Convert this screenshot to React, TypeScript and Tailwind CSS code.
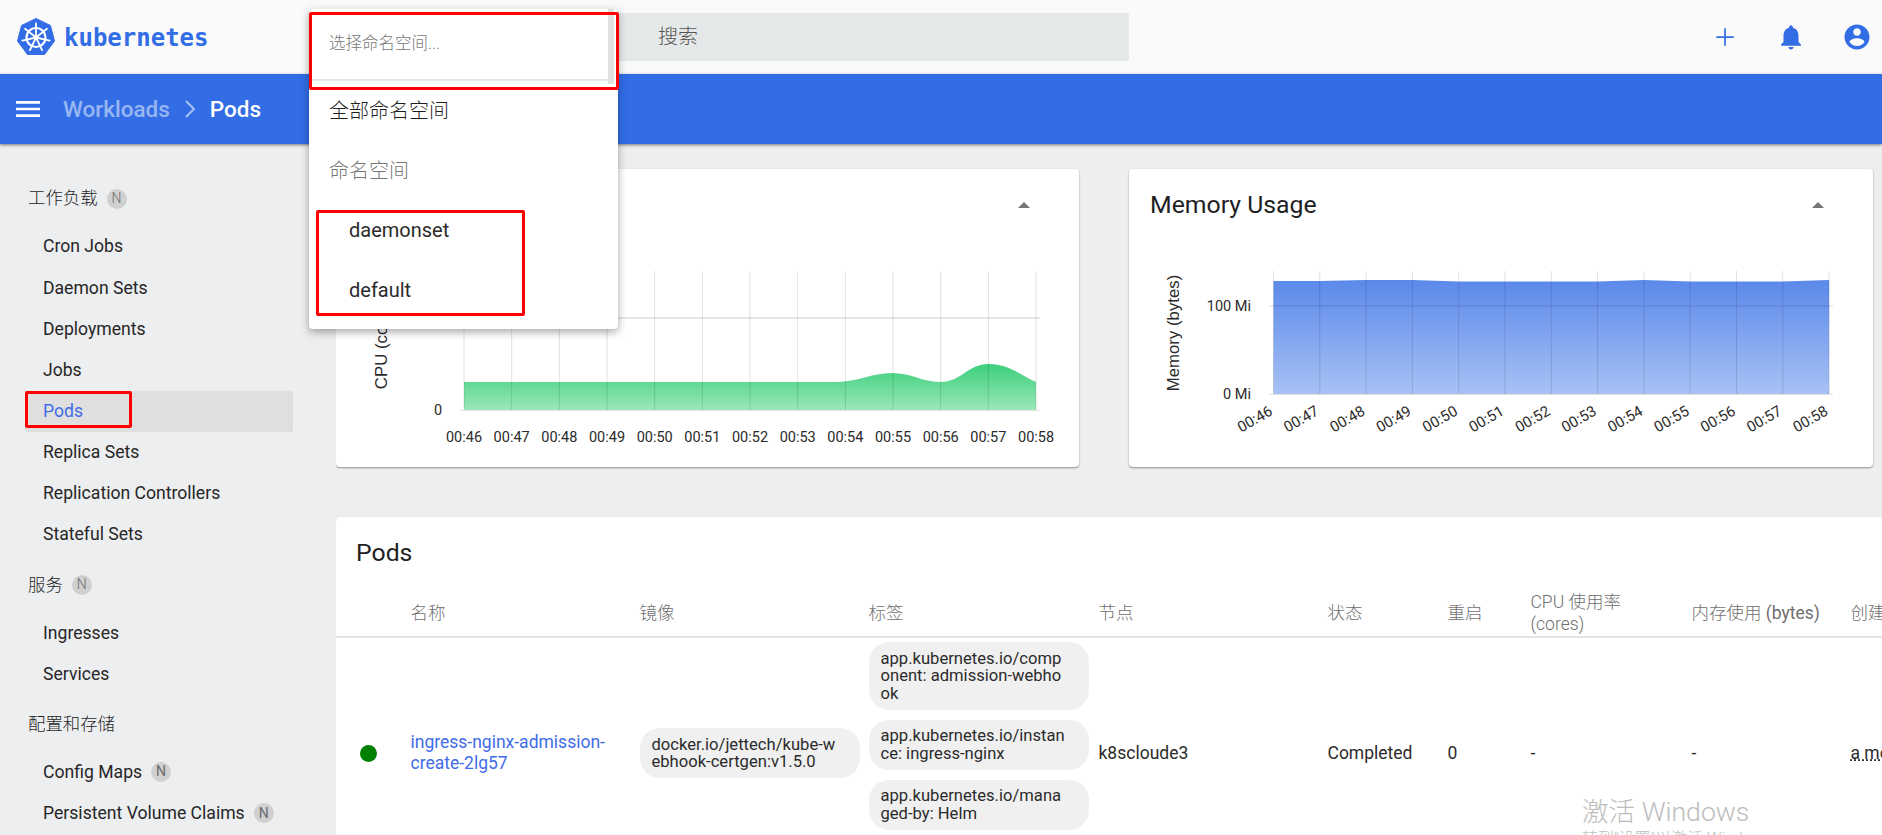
import React from "react";

const times = ["00:46", "00:47", "00:48", "00:49", "00:50", "00:51", "00:52", "00:53", "00:54", "00:55", "00:56", "00:57", "00:58"];

const groups = [
  { title: "工作负载", badge: true, items: ["Cron Jobs", "Daemon Sets", "Deployments", "Jobs", "Pods", "Replica Sets", "Replication Controllers", "Stateful Sets"] },
  { title: "服务", badge: true, items: ["Ingresses", "Services"] },
  { title: "配置和存储", badge: false, items: ["Config Maps", "Persistent Volume Claims"] },
];

function Badge() {
  return (
    <span className="ml-[9px] flex h-[20px] w-[20px] items-center justify-center rounded-full bg-[#d0d0d0] text-[14px] text-[#6b6b6b]">
      N
    </span>
  );
}

function Sidebar() {
  return (
    <aside className="w-[336px] shrink-0 pt-[33px] pl-[25px]">
      {groups.map((g) => (
        <div key={g.title} className="mb-[8px] w-[268px]">
          <div className="mb-[8px] flex h-[41px] items-center pt-[2px] pl-[3px] text-[17.4px] font-light text-[#1f1f1f]">
            {g.title}
            {g.badge && <Badge />}
          </div>
          {g.items.map((item) => (
            <div
              key={item}
              className={
                item === "Pods"
                  ? "flex h-[41.15px] items-center rounded-[2px] bg-[#dfdfdf] pl-[18px] text-[17.6px] text-[#3f6ce8]"
                  : "flex h-[41.15px] items-center pl-[18px] text-[17.6px] text-[#262626]"
              }
            >
              {item}
              {(item === "Config Maps" || item === "Persistent Volume Claims") && <Badge />}
            </div>
          ))}
        </div>
      ))}
    </aside>
  );
}

function CpuChart() {
  const xs = times.map((_, i) => 128 + i * 47.67);
  const area =
    "M128 141 L501 141 C521 141 536 132 556 132 C576 132 586 141 604 141 C626 141 631 123 653 123 C673 123 686 135 700 141 L700 169 L128 169 Z";
  return (
    <svg width="743" height="226" className="block">
      <defs>
        <linearGradient id="cpuFill" x1="0" y1="0" x2="0" y2="1">
          <stop offset="0" stopColor="#3ccf7c" />
          <stop offset="1" stopColor="#9ae7b9" />
        </linearGradient>
      </defs>
      <path d={area} fill="url(#cpuFill)" />
      <line x1="124" y1="77" x2="704" y2="77" stroke="#e6e6e6" strokeWidth="2" />
      <line x1="124" y1="169.5" x2="704" y2="169.5" stroke="#e6e6e6" />
      {xs.map((x) => (
        <line key={x} x1={x} y1="30" x2={x} y2="169" stroke="#000" strokeOpacity="0.12" />
      ))}
      {times.map((t, i) => (
        <text key={t} x={xs[i]} y="201" textAnchor="middle" fontSize="14.5" fill="#2b2b2b">
          {t}
        </text>
      ))}
      <text x="102" y="174" textAnchor="middle" fontSize="14.5" fill="#2b2b2b">
        0
      </text>
      <text transform="translate(51 102) rotate(-90)" textAnchor="middle" fontSize="16.8" fontFamily="'Liberation Sans', sans-serif" fill="#2b2b2b">
        CPU (cores)
      </text>
    </svg>
  );
}

function MemoryChart() {
  const xs = times.map((_, i) => 144.5 + i * 46.3);
  const tops = [40, 40, 39, 39, 40.5, 40.5, 40.5, 40.5, 39, 40.5, 40.5, 40.5, 39];
  const area = "M144.5 153 L" + xs.map((x, i) => x + " " + tops[i]).join(" L") + " L" + xs[12] + " 153 Z";
  return (
    <svg width="744" height="226" className="block">
      <defs>
        <linearGradient id="memFill" x1="0" y1="0" x2="0" y2="1">
          <stop offset="0" stopColor="#5b89ea" />
          <stop offset="1" stopColor="#a7c1f4" />
        </linearGradient>
      </defs>
      <path d={area} fill="url(#memFill)" />
      <line x1="140" y1="65" x2="704" y2="65" stroke="#000" strokeOpacity="0.07" strokeWidth="2" />
      <line x1="140" y1="153.5" x2="704" y2="153.5" stroke="#e0e0e0" />
      {xs.map((x) => (
        <line key={x} x1={x} y1="30" x2={x} y2="153" stroke="#000" strokeOpacity="0.12" />
      ))}
      {times.map((t, i) => (
        <text key={t} transform={`translate(${xs[i]} 173) rotate(-30)`} textAnchor="end" fontSize="15" fill="#2b2b2b">
          {t}
        </text>
      ))}
      <text x="122" y="70" textAnchor="end" fontSize="14.5" fill="#2b2b2b">
        100 Mi
      </text>
      <text x="122" y="158" textAnchor="end" fontSize="14.5" fill="#2b2b2b">
        0 Mi
      </text>
      <text transform="translate(50 92) rotate(-90)" textAnchor="middle" fontSize="16.8" fontFamily="'Liberation Sans', sans-serif" fill="#2b2b2b">
        Memory (bytes)
      </text>
    </svg>
  );
}

function UsageCard({ title, wide, children }: { title: string; wide?: boolean; children: React.ReactNode }) {
  return (
    <section className={(wide ? "w-[744px]" : "w-[743px]") + " shrink-0 overflow-hidden rounded-[4px] bg-white shadow-[0_1px_2px_rgba(0,0,0,0.4)]"}>
      <div className="flex h-[72px] items-center justify-between pr-[49px] pl-[21px]">
        <h2 className="text-[24.8px] font-normal text-[#1f1f1f]">{title}</h2>
        <span className="h-0 w-0 border-r-[6px] border-b-[6px] border-l-[6px] border-r-transparent border-b-[#757575] border-l-transparent" />
      </div>
      {children}
    </section>
  );
}

function Chip({ lines }: { lines: string[] }) {
  return (
    <div className="w-[220px] rounded-[20px] bg-[#f0f0f0] px-[12px] py-[7.5px] text-[16.6px] leading-[17.5px] text-[#2b2b2b]">
      {lines.map((l) => (
        <div key={l} className="whitespace-nowrap">
          {l}
        </div>
      ))}
    </div>
  );
}

function PodsCard() {
  return (
    <section className="mt-[50px] w-[1620px] rounded-t-[4px] bg-white shadow-[0_1px_2px_rgba(0,0,0,0.3)]">
      <h2 className="flex h-[73px] items-center pb-[2px] pl-[20px] text-[24.8px] font-normal text-[#1f1f1f]">Pods</h2>
      <div className="grid h-[48px] grid-cols-[74.5px_229px_229px_230px_229px_120px_83px_161px_159px_200px] items-center border-b-[2px] border-[#e4e4e4] text-[17.5px] leading-[22px] font-light text-[#6f6f6f]">
        <span />
        <span>名称</span>
        <span>镜像</span>
        <span>标签</span>
        <span>节点</span>
        <span>状态</span>
        <span>重启</span>
        <span>
          CPU 使用率
          <br />
          (cores)
        </span>
        <span className="whitespace-nowrap">
          内存使用 <span className="font-normal">(bytes)</span>
        </span>
        <span>创建</span>
      </div>
      <div className="grid h-[230px] grid-cols-[74.5px_229px_229px_230px_229px_120px_83px_161px_159px_200px] items-center text-[17.5px] text-[#2b2b2b]">
        <span className="ml-[24px] h-[17px] w-[17px] rounded-full bg-[#008000]" />
        <a className="leading-[21px] text-[#3f6ce8]">
          ingress-nginx-admission-
          <br />
          create-2lg57
        </a>
        <Chip lines={["docker.io/jettech/kube-w", "ebhook-certgen:v1.5.0"]} />
        <div className="flex flex-col gap-[10px] self-start pt-[4px]">
          <Chip lines={["app.kubernetes.io/comp", "onent: admission-webho", "ok"]} />
          <Chip lines={["app.kubernetes.io/instan", "ce: ingress-nginx"]} />
          <Chip lines={["app.kubernetes.io/mana", "ged-by: Helm"]} />
        </div>
        <span>k8scloude3</span>
        <span>Completed</span>
        <span>0</span>
        <span>-</span>
        <span>-</span>
        <span className="underline decoration-dotted">a month ago</span>
      </div>
    </section>
  );
}

function Logo() {
  const spokes = [0, 51.4, 102.8, 154.3, 205.7, 257.1, 308.6];
  return (
    <svg width="38" height="38" viewBox="0 0 38 38" className="shrink-0">
      <path d="M19 0.5 L33.5 7.5 L37.5 23 L27.5 36.5 L10.5 36.5 L0.5 23 L4.5 7.5 Z" fill="#326de6" stroke="#326de6" strokeWidth="1" strokeLinejoin="round" />
      <circle cx="19" cy="19.5" r="9.5" fill="none" stroke="#fff" strokeWidth="2.2" />
      <circle cx="19" cy="19.5" r="2" fill="#fff" />
      {spokes.map((a) => (
        <line key={a} x1="19" y1="19.5" x2="19" y2="5.5" stroke="#fff" strokeWidth="1.8" strokeLinecap="round" transform={`rotate(${a} 19 19.5)`} />
      ))}
    </svg>
  );
}

export default function App() {
  return (
    <div className="relative h-[835px] w-[1882px] overflow-hidden bg-[#edeef0] font-['Roboto','Noto_Sans_CJK_SC',sans-serif]">
      {/* top bar */}
      <header className="flex h-[74px] items-center bg-[#fafafa] pr-[10px] pl-[17px]">
        <Logo />
        <span className="ml-[9px] w-[516px] pt-[1px] font-['DejaVu_Sans_Mono',monospace] text-[24px] font-semibold text-[#326de6]">kubernetes</span>
        <div className="flex h-[48px] w-[549px] items-center rounded-[2px] bg-[#e5e8e8] pl-[17px] text-[20px] font-light text-[#555]">
          <svg width="24" height="24" viewBox="0 0 24 24" fill="#326de6" className="mr-[37px]">
            <path d="M15.5 14h-.79l-.28-.27C15.41 12.59 16 11.11 16 9.5 16 5.91 13.09 3 9.5 3S3 5.91 3 9.5 5.91 16 9.5 16c1.61 0 3.09-.59 4.23-1.57l.27.28v.79l5 4.99L20.49 19l-4.99-5zm-6 0C7.01 14 5 11.99 5 9.5S7.01 5 9.5 5 14 7.01 14 9.5 11.99 14 9.5 14z" />
          </svg>
          搜索
        </div>
        <div className="ml-auto flex items-center gap-[36px] text-[#326de6]">
          <svg width="30" height="30" viewBox="0 0 24 24" fill="currentColor">
            <path d="M19 12.7h-6.3V19h-1.4v-6.3H5v-1.4h6.3V5h1.4v6.3H19z" />
          </svg>
          <svg width="30" height="30" viewBox="0 0 24 24" fill="currentColor">
            <path d="M12 22c1.1 0 2-.9 2-2h-4c0 1.1.89 2 2 2zm6-6v-5c0-3.07-1.64-5.64-4.5-6.32V4c0-.83-.67-1.5-1.5-1.5s-1.5.67-1.5 1.5v.68C7.63 5.36 6 7.92 6 11v5l-2 2v1h16v-1l-2-2z" />
          </svg>
          <svg width="30" height="30" viewBox="0 0 24 24" fill="currentColor">
            <path d="M12 2C6.48 2 2 6.48 2 12s4.48 10 10 10 10-4.48 10-10S17.52 2 12 2zm0 3c1.66 0 3 1.34 3 3s-1.34 3-3 3-3-1.34-3-3 1.34-3 3-3zm0 14.2c-2.5 0-4.71-1.28-6-3.22.03-1.99 4-3.08 6-3.08 1.99 0 5.97 1.09 6 3.08-1.29 1.94-3.5 3.22-6 3.22z" />
          </svg>
        </div>
      </header>

      {/* breadcrumb bar */}
      <div className="relative z-10 flex h-[70px] items-center bg-[#326de6] pl-[12px] text-[22.5px] font-medium shadow-[0_1px_3px_rgba(0,0,0,0.5)]">
        <svg width="32" height="32" viewBox="0 0 24 24" fill="#fff">
          <path d="M3 18h18v-2H3v2zm0-5h18v-2H3v2zm0-7v2h18V6H3z" />
        </svg>
        <span className="ml-[19px] pt-[1px] text-white/50">Workloads</span>
        <svg width="13" height="20" viewBox="0 0 13 20" fill="none" stroke="#a9c1f4" strokeWidth="2" className="mr-[13px] ml-[14px]">
          <path d="M2 2l8 8-8 8" />
        </svg>
        <span className="pt-[1px] text-white">Pods</span>
      </div>

      <div className="flex h-[691px]">
        <Sidebar />
        <main className="min-w-0 flex-1 overflow-hidden pt-[25px]">
          <div className="flex gap-[50px]">
            <UsageCard title="CPU Usage">
              <CpuChart />
            </UsageCard>
            <UsageCard title="Memory Usage" wide>
              <MemoryChart />
            </UsageCard>
          </div>
          <PodsCard />
        </main>
      </div>

      {/* namespace dropdown */}
      <div className="absolute top-[9px] left-[309px] z-20 h-[320px] w-[309px] rounded-[4px] bg-white text-[18px] shadow-[0_3px_8px_rgba(0,0,0,0.35)]">
        <div className="mr-[8px] ml-[3px] flex h-[72px] items-start border-b-[2px] border-[#e4e4e4] pt-[23px] pl-[17px] text-[16.5px] font-light text-[#777]">
          选择命名空间...
        </div>
        <div className="absolute top-0 right-[4px] h-[75px] w-[6px] bg-[#e0e0e0]" />
        <div className="flex h-[60px] items-center pl-[20px] text-[20px] font-light text-[#1f1f1f]">全部命名空间</div>
        <div className="flex h-[60px] items-center pl-[20px] text-[20px] font-light text-[#777]">命名空间</div>
        <div className="flex h-[60px] items-center pb-[2px] pl-[40px] text-[20px] text-[#2b2b2b]">daemonset</div>
        <div className="flex h-[60px] items-center pb-[2px] pl-[40px] text-[20px] text-[#2b2b2b]">default</div>
      </div>

      {/* red annotation boxes */}
      <div className="absolute top-[12px] left-[309px] z-30 h-[78px] w-[310px] rounded-[2px] border-[3px] border-[#ff0000]" />
      <div className="absolute top-[210px] left-[316px] z-30 h-[106px] w-[209px] rounded-[2px] border-[3px] border-[#ff0000]" />
      <div className="absolute top-[391px] left-[25px] z-30 h-[37px] w-[107px] rounded-[2px] border-[3px] border-[#ff0000]" />

      {/* windows watermark */}
      <div className="pointer-events-none absolute top-[795px] left-[1582px] z-30 whitespace-nowrap text-[#bdbdbd]">
        <div className="text-[26.6px] leading-[34px] font-light">激活 Windows</div>
        <div className="text-[16px] leading-[20px] font-light">转到"设置"以激活 Windows。</div>
      </div>
    </div>
  );
}
